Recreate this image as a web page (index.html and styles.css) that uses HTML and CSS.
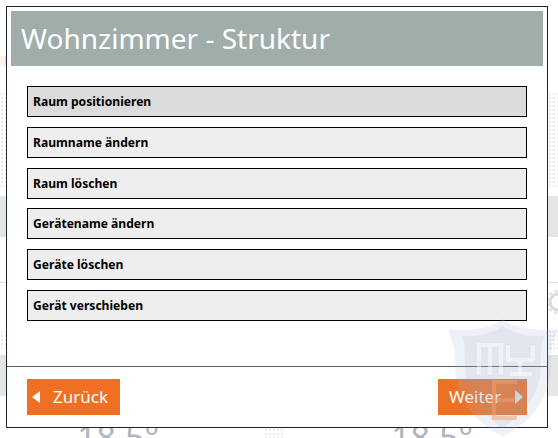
FILE: index.html
```html
<!DOCTYPE html>
<html lang="de">
<head>
    <meta charset="UTF-8">
    <meta name="viewport" content="width=device-width, initial-scale=1.0">
    <title>Wohnzimmer - Struktur</title>
    <link rel="stylesheet" href="styles.css">
</head>
<body>

<div class="background">
    <div class="bgTab"></div>
    <div class="bgDots"></div>
    <div class="bgBand"></div>
    <div class="bgLine"></div>
    <div class="bgDots small"></div>
    <div class="bgBand low"></div>
    <svg class="bgGear" viewBox="0 0 24 24">
        <circle cx="12" cy="12" r="8" fill="none" stroke="#d9dbdb" stroke-width="3"/>
        <circle cx="12" cy="12" r="11" fill="none" stroke="#e2e4e4" stroke-width="3" stroke-dasharray="3 3"/>
    </svg>
    <div class="bgText bgTextLeft">18.5°</div>
    <div class="bgText bgTextRight">18.5°</div>
    <div class="bgDots bottom"></div>
</div>

<div class="dialog">
    <h1 class="dialogTitle">Wohnzimmer - Struktur</h1>
    <div class="menu">
        <div class="menuItem active">Raum positionieren</div>
        <div class="menuItem">Raumname ändern</div>
        <div class="menuItem">Raum löschen</div>
        <div class="menuItem">Gerätename ändern</div>
        <div class="menuItem">Geräte löschen</div>
        <div class="menuItem">Gerät verschieben</div>
    </div>
    <div class="dialogFooter">
        <button class="btn back"><span class="arrowLeft"></span>Zurück</button>
        <button class="btn next">Weiter<span class="arrowRight"></span></button>
    </div>
</div>

<!-- Wasserzeichen liegt ueber dem Dialog -->
<svg class="shield" viewBox="0 0 110 120">
    <path d="M55 1 C44 9 24 14 3 11 C0 11 0 14 2 18 C6 26 7 34 7 46 C7 84 30 105 55 119 C80 105 103 84 103 46 C103 34 104 26 108 18 C110 14 110 11 107 11 C86 14 66 9 55 1 Z" fill="#a9bbd2" fill-opacity="0.2"/>
    <path d="M55 8 C45 15 30 19 14 18 C17 28 17 36 17 46 C17 78 36 97 55 110 C74 97 93 78 93 46 C93 36 93 28 96 18 C80 19 65 15 55 8 Z" fill="#8fa3bd" fill-opacity="0.12"/>
    <path d="M31 57 V27 H53 V57 M42 27 V57 M60 27 V42 M85 27 V42 M58 42 H87 M72 42 V57 M62 56 H84" stroke="#fff" stroke-opacity="0.45" stroke-width="4" fill="none"/>
    <path d="M69 64 H46 V100 H69 M46 82 H66" stroke="#f3a070" stroke-opacity="0.5" stroke-width="4" fill="none"/>
</svg>

</body>
</html>
```
FILE: styles.css
```css
html, body {
    height: 100%;
}

body {
    margin: 0;
    padding: 6px 10px 10px 6px;
    box-sizing: border-box;
    overflow: hidden;
    background-color: #fff;
    font-family: 'Noto Sans', sans-serif;
}

.dialog {
    position: relative;
    background-color: #fff;
    border: 1px solid #1a2238;
    height: 422px;
    box-sizing: border-box;
    padding: 4px;
    display: flex;
    flex-direction: column;
}

.dialogTitle {
    margin: 0;
    height: 55px;
    line-height: 54px;
    padding-left: 10px;
    background-color: #a0adab;
    color: #fff;
    font-size: 28px;
    font-weight: normal;
}

.menu {
    margin: 20px 16px 0;
    display: flex;
    flex-direction: column;
    gap: 9.8px;
}

.menuItem {
    height: 31px;
    line-height: 29px;
    box-sizing: border-box;
    padding-left: 5px;
    border: 1px solid #000;
    background-color: #eee;
    color: #000;
    font-size: 12.100px;
    font-weight: bold;
}

.menuItem.active {
    background-color: #dcdcdc;
}

.dialogFooter {
    margin: 45px -4px 0;
    padding: 12px 20px 0;
    border-top: 1px solid #4d6060;
    display: flex;
    justify-content: space-between;
}

.btn {
    height: 36px;
    padding: 0;
    border: none;
    background-color: #ef7023;
    color: #fff;
    font-family: inherit;
    font-size: 17px;
    display: flex;
    align-items: center;
}

.back {
    width: 93px;
    padding-left: 5px;
}

.next {
    width: 89px;
    padding-left: 11px;
}

.arrowLeft {
    border-right: 8px solid #fff;
    border-top: 6px solid transparent;
    border-bottom: 6px solid transparent;
    margin-right: 13px;
}

.arrowRight {
    border-left: 8px solid #dfe5ec;
    border-top: 7px solid transparent;
    border-bottom: 7px solid transparent;
    margin-left: 14px;
}

/* alles hinter dem Dialog */
.background {
    position: absolute;
    top: 0;
    left: 0;
    width: 558px;
    height: 438px;
    overflow: hidden;
}

.bgDots {
    margin-top: 92px;
    height: 97px;
    background-image: radial-gradient(#e9eaea 35%, transparent 40%);
    background-size: 4px 4px;
}

.bgDots.small {
    margin-top: 47px;
    height: 19px;
}

.bgDots.bottom {
    position: absolute;
    left: 264px;
    top: 428px;
    width: 20px;
    height: 10px;
    margin: 0;
}

.bgBand {
    margin-top: 7px;
    height: 41px;
    background-color: #e3e6e5;
}

.bgBand.low {
    margin-top: 6px;
    height: 41px;
}

.bgLine {
    margin-top: 45px;
    height: 1px;
    background-color: #dcdede;
}

.bgTab {
    position: absolute;
    top: 56px;
    left: 0;
    width: 5px;
    height: 10px;
    border-right: 1px solid #f6d9c4;
    background-color: #fdf3ec;
}

.bgGear {
    position: absolute;
    left: 546px;
    top: 290px;
    width: 24px;
    height: 24px;
}

.bgText {
    position: absolute;
    top: 420px;
    font-size: 34px;
    line-height: 34px;
    color: #b0b6bc;
}

.bgTextLeft {
    left: 77px;
}

.bgTextRight {
    left: 391px;
}

.shield {
    position: absolute;
    left: 448px;
    top: 318px;
    width: 110px;
    height: 120px;
}
```
